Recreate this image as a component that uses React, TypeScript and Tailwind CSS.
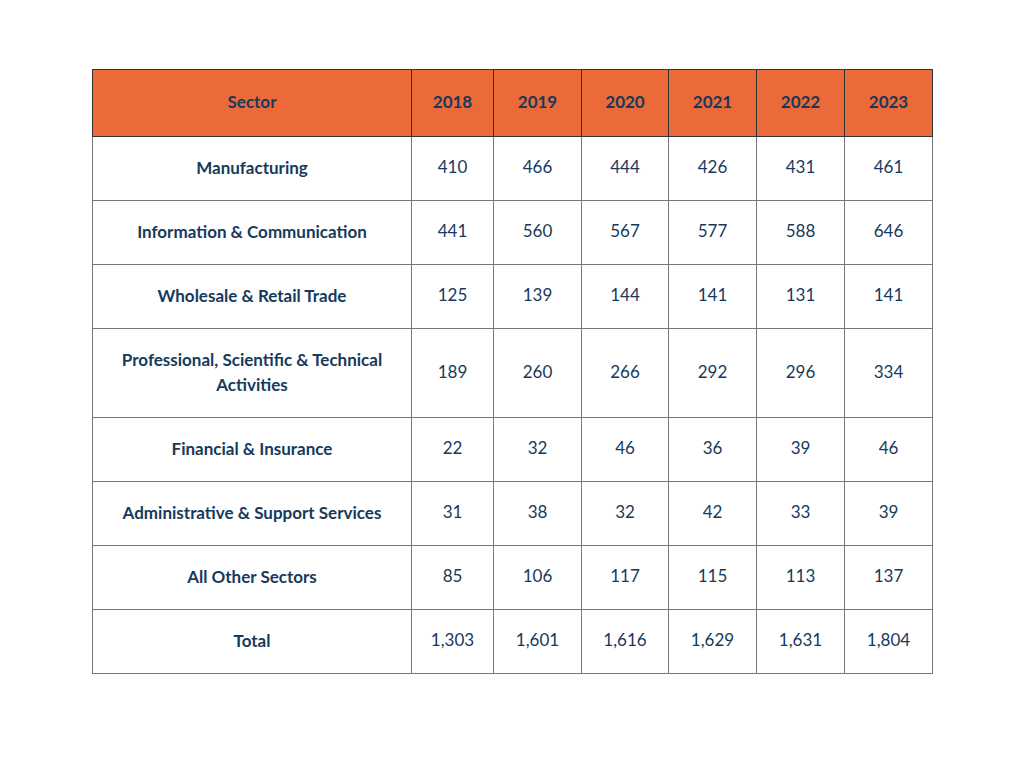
const YEARS = ["2018", "2019", "2020", "2021", "2022", "2023"];

const ROWS: { sector: string; values: string[]; tall?: boolean }[] = [
  { sector: "Manufacturing", values: ["410", "466", "444", "426", "431", "461"] },
  { sector: "Information & Communication", values: ["441", "560", "567", "577", "588", "646"] },
  { sector: "Wholesale & Retail Trade", values: ["125", "139", "144", "141", "131", "141"] },
  {
    sector: "Professional, Scientific & Technical Activities",
    values: ["189", "260", "266", "292", "296", "334"],
    tall: true,
  },
  { sector: "Financial & Insurance", values: ["22", "32", "46", "36", "39", "46"] },
  { sector: "Administrative & Support Services", values: ["31", "38", "32", "42", "33", "39"] },
  { sector: "All Other Sectors", values: ["85", "106", "117", "115", "113", "137"] },
  { sector: "Total", values: ["1,303", "1,601", "1,616", "1,629", "1,631", "1,804"] },
];

const COL_WIDTHS = ["w-[319px]", "w-[82px]", "w-[88px]", "w-[87px]", "w-[88px]", "w-[88px]", "w-[88px]"];

export default function App() {
  return (
    <div className="min-h-[768px] w-[1024px] bg-white pt-[69px] pl-[92px] font-['Lato','Open_Sans',sans-serif] text-[#163a5c]">
      <table className="w-[841px] table-fixed border-collapse border border-[#333333] text-[17px]">
        <colgroup>
          {COL_WIDTHS.map((w, i) => (
            <col key={i} className={w} />
          ))}
        </colgroup>
        <thead>
          <tr className="h-[67px] bg-[#ec6939]">
            <th className="border border-[#333333] pb-[3px] text-center font-bold">Sector</th>
            {YEARS.map((y) => (
              <th key={y} className="border border-[#333333] pb-[3px] text-center font-bold">
                {y}
              </th>
            ))}
          </tr>
        </thead>
        <tbody>
          {ROWS.map((row) => (
            <tr key={row.sector} className={row.tall ? "h-[89px]" : "h-[64px]"}>
              <td className="border border-[#777777] px-5 pb-[3px] text-center font-bold leading-[25px]">
                {row.sector}
              </td>
              {row.values.map((v, i) => (
                <td key={i} className="border border-[#777777] pb-[3px] text-center">
                  {v}
                </td>
              ))}
            </tr>
          ))}
        </tbody>
      </table>
    </div>
  );
}
